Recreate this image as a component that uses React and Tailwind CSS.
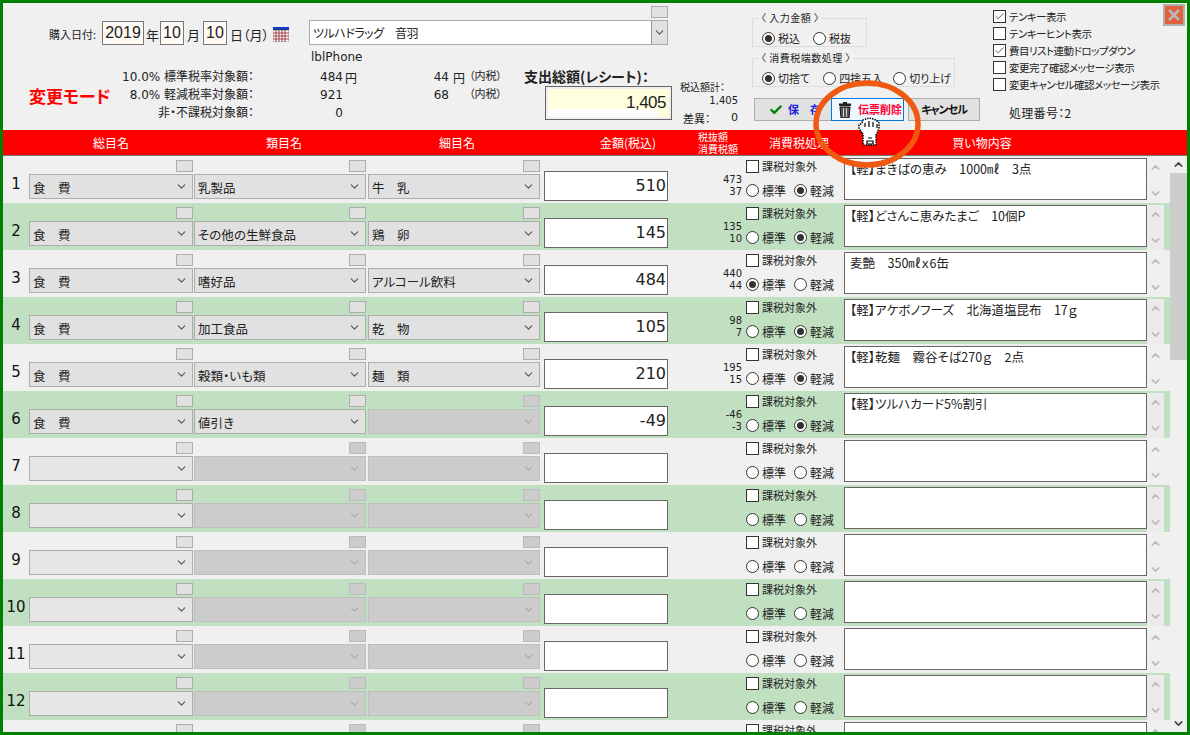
import React from "react";
import { ChevronDown, ChevronUp, Check } from "lucide-react";

const rows = [
    { no: 1, a: "食　費", b: "乳製品", c: "牛　乳", amt: "510", t1: "473", t2: "37", rate: "low", memo: "【軽】まきばの恵み　1000㎖　3点" },
    { no: 2, a: "食　費", b: "その他の生鮮食品", c: "鶏　卵", amt: "145", t1: "135", t2: "10", rate: "low", memo: "【軽】どさんこ恵みたまご　10個P" },
    { no: 3, a: "食　費", b: "嗜好品", c: "アルコール飲料", amt: "484", t1: "440", t2: "44", rate: "std", memo: "麦艶　350㎖ｘ6缶" },
    { no: 4, a: "食　費", b: "加工食品", c: "乾　物", amt: "105", t1: "98", t2: "7", rate: "low", memo: "【軽】アケボノフーズ　北海道塩昆布　17ｇ" },
    { no: 5, a: "食　費", b: "穀類・いも類", c: "麺　類", amt: "210", t1: "195", t2: "15", rate: "low", memo: "【軽】乾麺　霧谷そば270ｇ　2点" },
    { no: 6, a: "食　費", b: "値引き", c: "", amt: "-49", t1: "-46", t2: "-3", rate: "low", memo: "【軽】ツルハカード5%割引" },
    { no: 7 }, { no: 8 }, { no: 9 }, { no: 10 }, { no: 11 }, { no: 12 }, { no: 13 },
];

const Radio = ({ on }) => (
    <span className="flex h-[13px] w-[13px] shrink-0 items-center justify-center rounded-full border border-[#333] bg-white">
        {on && <span className="h-[7px] w-[7px] rounded-full bg-[#333]" />}
    </span>
);

const CheckBox = ({ on }) => (
    <span className="flex h-[13px] w-[13px] shrink-0 items-center justify-center border border-[#333] bg-white">
        {on && <Check size={11} strokeWidth={2} className="text-[#555]" />}
    </span>
);

const SmallBtn = ({ off }) => (
    <div className={`ml-auto h-3 w-[17px] border ${off ? "border-[#bbb] bg-[#ccc]" : "border-[#adadad] bg-[#e1e1e1]"}`} />
);

const Select = ({ value, off, empty }) => (
    <div
        className={`mt-0.5 flex h-[25px] items-center border pl-[3px] pr-1 text-[12.5px] ${
            off ? "border-[#bfbfbf] bg-[#ccc] text-[#999]" : empty ? "border-[#adadad] bg-[#e6e6e6]" : "border-[#adadad] bg-[#e1e1e1]"
        }`}
    >
        <span className="flex-1 truncate pt-[3px]">{value}</span>
        <ChevronDown size={13} className={off ? "text-[#aaa]" : "text-[#555]"} />
    </div>
);

const Row = ({ row }) => {
    const filled = !!row.a;
    const green = row.no % 2 === 0;
    return (
        <div className={`flex h-[47px] shrink-0 ${green ? "bg-[#c1e0c1]" : "bg-[#f0f0f0]"}`}>
            <div className="w-[26px] pt-[19px] text-center font-['DejaVu_Sans',sans-serif] text-[15px] leading-[18px] text-[#111]">{row.no}</div>
            <div className="w-[164px] pt-1">
                <SmallBtn />
                <Select value={row.a} empty={!filled} />
            </div>
            <div className="ml-px w-[172px] pt-1">
                <SmallBtn off={!filled} />
                <Select value={row.b} off={!filled} />
            </div>
            <div className="ml-0.5 w-[172px] pt-1">
                <SmallBtn off={!row.c} />
                <Select value={row.c} off={!row.c} />
            </div>
            <div className="ml-1 mt-[15px] flex h-[30px] w-[124px] items-center justify-end border border-[#666] bg-white pr-px font-['DejaVu_Sans',sans-serif] text-[16px]">
                {row.amt}
            </div>
            <div className="mt-[18px] w-[74px] text-right font-['DejaVu_Sans',sans-serif] text-[10px] leading-[11.5px] text-[#222]">
                <div>{row.t1}</div>
                <div>{row.t2}</div>
            </div>
            <div className="ml-1 w-[98px] pt-1 text-[11px]">
                <div className="flex h-[13px] items-center gap-[3px]">
                    <CheckBox />
                    <span>課税対象外</span>
                </div>
                <div className="mt-[11px] flex h-[13px] items-center gap-[3px]">
                    <Radio on={row.rate === "std"} />
                    <span className="text-[12px]">標準</span>
                    <span className="ml-[5px]">
                        <Radio on={row.rate === "low"} />
                    </span>
                    <span className="text-[12px]">軽減</span>
                </div>
            </div>
            <div className="mt-0.5 h-[42px] w-[303px] border border-[#666] bg-white pl-[5px] pt-px text-[12.5px] leading-[18px]">{row.memo}</div>
            <div className="w-[17px]">
                <div className={`mt-0.5 flex h-[45px] w-[17px] flex-col items-center justify-between py-[3px] text-[#bbb] ${green ? "bg-[#ebebeb]" : ""}`}>
                    <ChevronUp size={13} strokeWidth={3} />
                    <ChevronDown size={13} strokeWidth={3} />
                </div>
            </div>
            <div className="w-[5px]" />
        </div>
    );
};

const CheckRow = ({ on, label }) => (
    <div className="flex h-[17px] items-center gap-[3px] text-[10.5px] tracking-[-0.5px]">
        <CheckBox on={on} />
        <span className="whitespace-nowrap">{label}</span>
    </div>
);

const RadioItem = ({ on, label, className }) => (
    <div className={`flex items-center gap-[3px] ${className || ""}`}>
        <Radio on={on} />
        <span className="whitespace-nowrap">{label}</span>
    </div>
);

const App = () => {
    return (
        <div className="relative h-[735px] w-[1190px] overflow-hidden border-[3px] border-[#008000] bg-[#f0f0f0] font-['Noto_Sans_CJK_JP',sans-serif] text-[12px] text-[#222] [font-feature-settings:'palt']">
            {/* 上部 */}
            <div className="flex h-[127px]">
                <div className="w-[742px] shrink-0">
                    <div className="flex h-[64px]">
                        <div className="flex h-[42px] w-[306px] items-end text-[13px]">
                            <div className="mb-[3px] w-[93px] text-right text-[11px]">購入日付:</div>
                            <div className="ml-1.5 flex h-6 w-[42px] items-center justify-center border border-[#777] bg-[#fffaf3] font-['Liberation_Sans',sans-serif] text-[16px]">2019</div>
                            <div className="mb-[1px] w-4 pl-0.5">年</div>
                            <div className="flex h-6 w-6 items-center justify-center border border-[#777] bg-[#fffaf3] font-['Liberation_Sans',sans-serif] text-[16px]">10</div>
                            <div className="mb-[1px] w-[19px] pl-[3px]">月</div>
                            <div className="flex h-6 w-6 items-center justify-center border border-[#777] bg-[#fffaf3] font-['Liberation_Sans',sans-serif] text-[16px]">10</div>
                            <div className="mb-[1px] ml-[3px] w-[43px] whitespace-nowrap">日（月）</div>
                            <svg width="16" height="15" viewBox="0 0 16 15" className="mb-[3px] shrink-0">
                                <rect width="16" height="3" fill="#1040c0" />
                                <rect y="3" width="16" height="12" fill="#fff" stroke="#333" strokeWidth="0.5" />
                                <path d="M0 6h16M0 9h16M0 12h16M3 3v12M6 3v12M9 3v12M12 3v12" stroke="#a04040" strokeWidth="1" />
                            </svg>
                        </div>
                        <div className="w-[359px] pt-[3px]">
                            <div className="ml-auto h-3 w-[17px] border border-[#adadad] bg-[#e1e1e1]" />
                            <div className="mt-0.5 flex h-[25px] items-center border border-[#aaa] bg-white pl-[3px] text-[12px] tracking-[-0.5px]">
                                <span className="flex-1">ツルハドラッグ　音羽</span>
                                <span className="flex h-[23px] w-4 items-center justify-center border-l border-[#999] bg-[#e1e1e1]">
                                    <ChevronDown size={13} className="text-[#555]" />
                                </span>
                            </div>
                            <div className="mt-[3px] pl-0.5 font-['DejaVu_Sans',sans-serif] text-[12px] leading-[18px]">lblPhone</div>
                        </div>
                    </div>
                    <div className="flex h-[63px]">
                        <div className="ml-[26px] mt-[17px] w-[90px] whitespace-nowrap text-[17px] font-bold leading-6 text-[#ff0000]">変更モード</div>
                        <div className="grid h-[54px] grid-cols-[135px_89px_17px_89px_20px_46px] grid-rows-[18px_18px_18px] whitespace-nowrap pt-px font-['DejaVu_Sans','Noto_Sans_CJK_JP',sans-serif] text-[12px] leading-[18px]">
                            <div className="text-right">10.0% 標準税率対象額：</div>
                            <div className="text-right">484</div>
                            <div className="pl-0.5 pt-0.5">円</div>
                            <div className="text-right">44</div>
                            <div className="pl-1 pt-0.5">円</div>
                            <div className="text-[11px]">（内税）</div>
                            <div className="text-right">8.0% 軽減税率対象額：</div>
                            <div className="text-right">921</div>
                            <div />
                            <div className="text-right">68</div>
                            <div />
                            <div className="text-[11px]">（内税）</div>
                            <div className="text-right">非・不課税対象額：</div>
                            <div className="text-right">0</div>
                        </div>
                        <div className="ml-[9px] w-[148px] shrink-0">
                            <div className="whitespace-nowrap text-[14px] font-bold leading-[18px]">支出総額(レシート)：</div>
                            <div className="ml-[21px] mt-px h-[34px] w-[127px] border border-[#666] p-0.5">
                                <div className="relative h-[28px] bg-[#ffffe0] text-right font-['Liberation_Sans',sans-serif] text-[17px] leading-[28px] tracking-[-0.5px]">
                                    <div className="absolute bottom-0 left-0 h-2 w-[110px] bg-white" />
                                    <span className="relative pr-[3px]">1,405</span>
                                </div>
                            </div>
                        </div>
                        <div className="ml-2 w-[58px] shrink-0 pt-[13px] text-[10px] leading-[14px]">
                            <div className="whitespace-nowrap">税込額計：</div>
                            <div className="text-right font-['DejaVu_Sans',sans-serif]">1,405</div>
                            <div className="mt-[3px] flex justify-between pl-[3px] text-[11px]">
                                <span>差異：</span>
                                <span className="font-['DejaVu_Sans',sans-serif]">0</span>
                            </div>
                        </div>
                    </div>
                </div>
                <div className="w-[248px] shrink-0 pl-[7px] pt-[9px] text-[11px]">
                    <fieldset className="h-[35px] w-[115px] border border-[#ddd] pl-[9px]">
                        <legend className="ml-[-3px] whitespace-nowrap px-0.5 text-[10px] leading-3 tracking-[0.5px]">〈 入力金額 〉</legend>
                        <div className="mt-1.5 flex">
                            <RadioItem on label="税込" />
                            <RadioItem label="税抜" className="ml-[13px]" />
                        </div>
                    </fieldset>
                    <fieldset className="mt-[5px] h-[35px] w-[203px] border border-[#ddd] pl-[9px]">
                        <legend className="ml-[-3px] whitespace-nowrap px-0.5 text-[10px] leading-3 tracking-[0.5px]">〈 消費税端数処理 〉</legend>
                        <div className="mt-1.5 flex">
                            <RadioItem on label="切捨て" />
                            <RadioItem label="四捨五入" className="ml-[13px]" />
                            <RadioItem label="切り上げ" className="ml-[10px]" />
                        </div>
                    </fieldset>
                    <div className="mt-[11px] ml-0.5 flex h-[23px] text-[11px] font-bold">
                        <div className="flex w-[78px] items-center border border-[#adadad] bg-[#e1e1e1] pl-3.5">
                            <Check size={14} strokeWidth={4} className="text-[#008000]" />
                            <span className="ml-[5px] whitespace-nowrap text-[#2020e0]">保　存</span>
                        </div>
                        <div className="relative -ml-px flex w-[73px] items-center border border-[#0078d7] bg-[#f0f8ff] pl-1.5">
                            <svg width="14" height="16" viewBox="0 0 14 16" className="shrink-0">
                                <path d="M5 0h4v1.5h4V4H1V1.5h4z" fill="#222" />
                                <path d="M2 5h10l-1 11H3z" fill="#555" stroke="#111" />
                                <path d="M5.5 6v9M8.5 6v9" stroke="#ccc" />
                            </svg>
                            <span className="ml-1.5 whitespace-nowrap text-[#ff0033]">伝票削除</span>
                        </div>
                        <div className="ml-1 flex w-[72px] items-center justify-center border border-[#adadad] bg-[#e1e1e1] tracking-[-1px] text-[#111]">キャンセル</div>
                    </div>
                </div>
                <div className="w-[170px] shrink-0 pt-[5px]">
                    <CheckRow on label="テンキー表示" />
                    <CheckRow label="テンキーヒント表示" />
                    <CheckRow on label="費目リスト連動ドロップダウン" />
                    <CheckRow label="変更完了確認メッセージ表示" />
                    <CheckRow label="変更キャンセル確認メッセージ表示" />
                    <div className="ml-4 mt-[11px] text-[12px] leading-[18px] tracking-[0.3px]">処理番号：2</div>
                </div>
                <div className="mt-px flex h-[22px] w-[22px] items-center justify-center border-2 border-[#b0b0b0] bg-[#e2603a] text-[#b8b8c0]">
                    <svg width="14" height="14" viewBox="0 0 14 14">
                        <path d="M2 2l10 10M12 2L2 12" stroke="currentColor" strokeWidth="2.5" />
                    </svg>
                </div>
            </div>

            {/* 見出し */}
            <div className="flex h-[26px] border-b border-[#777] bg-[#ff0000] text-[12px] leading-[25px] text-white">
                <div className="ml-[26px] w-[164px] text-center">総目名</div>
                <div className="ml-[5px] w-[172px] text-center">類目名</div>
                <div className="ml-px w-[172px] text-center">細目名</div>
                <div className="ml-[15px] w-[140px] text-center">金額(税込)</div>
                <div className="w-[60px] text-[10px] leading-[12px]">
                    <div className="pt-px">税抜額</div>
                    <div>消費税額</div>
                </div>
                <div className="w-[82px] text-center">消費税処理</div>
                <div className="w-[284px] text-center">買い物内容</div>
            </div>

            {/* 明細 */}
            <div className="flex h-[576px]">
                <div className="flex w-[1167px] flex-col overflow-hidden">
                    {rows.map((row) => (
                        <Row key={row.no} row={row} />
                    ))}
                </div>
                <div className="flex w-[17px] flex-col bg-[#f0f0f0]">
                    <div className="flex h-[17px] items-center justify-center text-[#444]">
                        <ChevronUp size={13} strokeWidth={3} />
                    </div>
                    <div className="h-[187px] bg-[#cdcdcd]" />
                    <div className="flex-1" />
                    <div className="flex h-[17px] items-center justify-center text-[#444]">
                        <ChevronDown size={13} strokeWidth={3} />
                    </div>
                </div>
            </div>

            {/* 赤丸とカーソル */}
            <svg width="116" height="96" viewBox="0 0 116 96" className="absolute left-[806px] top-[73px]">
                <ellipse cx="58" cy="48" rx="51" ry="41" fill="none" stroke="#f05a10" strokeWidth="5.5" />
            </svg>
            <svg width="24" height="30" viewBox="0 0 24 30" className="absolute left-[855px] top-[114px]">
                <path
                    d="M4 16L1 11V8l3-2 1-3 3-1 3-1 4 1 3 1 3 3v5l-2 5-1 2v10H5V17z"
                    fill="#fff"
                    stroke="#000"
                    strokeWidth="1.5"
                    strokeDasharray="1.5 1"
                />
                <path d="M7 6v4M11 4v6M15 5v5M19 7v4M9 24h6v3H9zM10 21h4" stroke="#000" strokeWidth="1.2" fill="none" />
            </svg>
        </div>
    );
};

export default App;
